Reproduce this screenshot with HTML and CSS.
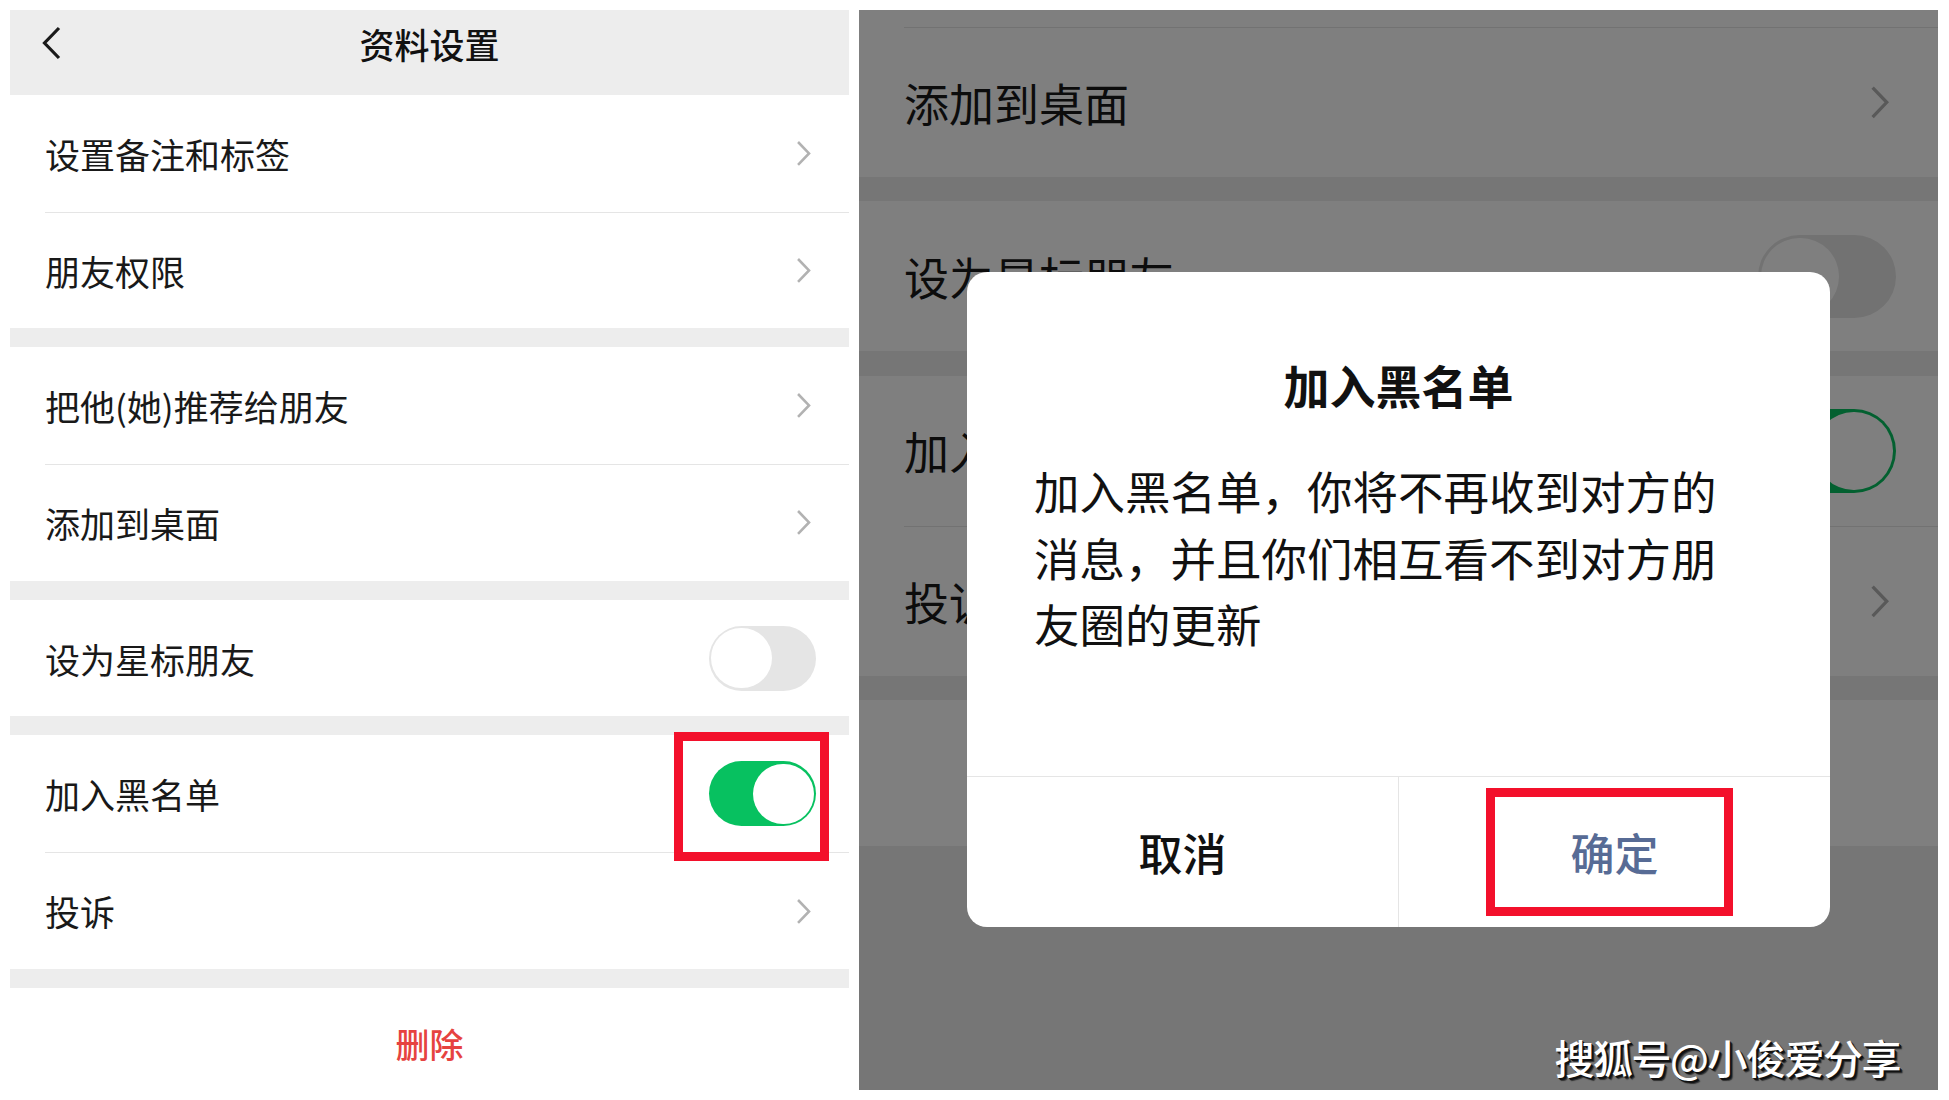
FILE: index.html
```html
<!DOCTYPE html>
<html lang="zh-CN">
  <head>
    <meta charset="UTF-8" />
    <meta name="viewport" content="width=device-width, initial-scale=1.0" />
    <title>资料设置</title>
    <link rel="stylesheet" href="styles.css">
  </head>
  <body>
    <div class="page">
      <!-- left: settings screen -->
      <section class="phone">
        <header class="nav-bar">
          <svg class="nav-back" viewBox="0 0 19 34"><path d="M17 2 L2.5 17 L17 32" /></svg>
          <h1 class="nav-title">资料设置</h1>
          <span></span>
        </header>

        <div class="group">
          <div class="cell"><div class="cell-body"><span class="cell-label">设置备注和标签</span><svg class="arrow" viewBox="0 0 15 27"><path d="M2 2 L13 13.5 L2 25" /></svg></div></div>
          <div class="cell"><div class="cell-body"><span class="cell-label">朋友权限</span><svg class="arrow" viewBox="0 0 15 27"><path d="M2 2 L13 13.5 L2 25" /></svg></div></div>
        </div>

        <div class="group">
          <div class="cell"><div class="cell-body"><span class="cell-label">把他(她)推荐给朋友</span><svg class="arrow" viewBox="0 0 15 27"><path d="M2 2 L13 13.5 L2 25" /></svg></div></div>
          <div class="cell"><div class="cell-body"><span class="cell-label">添加到桌面</span><svg class="arrow" viewBox="0 0 15 27"><path d="M2 2 L13 13.5 L2 25" /></svg></div></div>
        </div>

        <div class="group">
          <div class="cell"><div class="cell-body"><span class="cell-label">设为星标朋友</span><span class="switch"><span class="switch-thumb"></span></span></div></div>
        </div>

        <div class="group">
          <div class="cell">
            <div class="cell-body"><span class="cell-label">加入黑名单</span><span class="switch switch--on"><span class="switch-thumb"></span></span></div>
            <div class="mark mark--switch"></div>
          </div>
          <div class="cell"><div class="cell-body"><span class="cell-label">投诉</span><svg class="arrow" viewBox="0 0 15 27"><path d="M2 2 L13 13.5 L2 25" /></svg></div></div>
        </div>

        <div class="group">
          <div class="cell cell--danger"><span class="cell-label">删除</span></div>
        </div>
      </section>

      <!-- right: same screen scrolled, with the confirm dialog -->
      <section class="phone phone--dim">
        <div class="group">
          <div class="cell cell--cut"></div>
          <div class="cell"><div class="cell-body"><span class="cell-label">添加到桌面</span><svg class="arrow" viewBox="0 0 15 27"><path d="M2 2 L13 13.5 L2 25" /></svg></div></div>
        </div>

        <div class="group">
          <div class="cell"><div class="cell-body"><span class="cell-label">设为星标朋友</span><span class="switch"><span class="switch-thumb"></span></span></div></div>
        </div>

        <div class="group">
          <div class="cell"><div class="cell-body"><span class="cell-label">加入黑名单</span><span class="switch switch--on"><span class="switch-thumb"></span></span></div></div>
          <div class="cell"><div class="cell-body"><span class="cell-label">投诉</span><svg class="arrow" viewBox="0 0 15 27"><path d="M2 2 L13 13.5 L2 25" /></svg></div></div>
        </div>

        <div class="group">
          <div class="cell cell--danger"><span class="cell-label">删除</span></div>
        </div>

        <div class="mask">
          <div class="dialog">
            <h2 class="dialog-title">加入黑名单</h2>
            <p class="dialog-text">加入黑名单，你将不再收到对方的消息，并且你们相互看不到对方朋友圈的更新</p>
            <div class="dialog-actions">
              <div class="dialog-btn">取消</div>
              <div class="dialog-btn dialog-btn--primary">
                确定
                <div class="mark mark--confirm"></div>
              </div>
            </div>
          </div>
        </div>

        <div class="watermark">搜狐号@小俊爱分享</div>
      </section>
    </div>
  </body>
</html>
```

FILE: styles.css
```css
*,
*::after,
*::before {
  margin: 0;
  padding: 0;
  box-sizing: border-box;
}

body {
  background: #fff;
  font-family: "Noto Sans CJK SC", "Noto Sans", sans-serif;
  color: #191919;
}

.page {
  display: flex;
  gap: 10px;
  padding: 10px;
}

.phone {
  position: relative;
  width: 839px;
  height: 1080px;
  overflow: hidden;
  background: #ededed;
  font-size: 35px;
}

.phone--dim {
  width: 1079px;
  font-size: 45px;
}

/* top bar */
.nav-bar {
  height: 85px;
  display: grid;
  grid-template-columns: 1fr auto 1fr;
  align-items: center;
  padding-bottom: 19px;
}

.nav-back {
  width: 19px;
  height: 34px;
  margin-left: 32px;
  fill: none;
  stroke: #1a1a1a;
  stroke-width: 3.2;
}

.nav-title {
  font-size: 35px;
  font-weight: 500;
  line-height: 1;
  color: #111;
}

/* list */
.group {
  background: #fff;
  margin-bottom: 0.543em;
}

.cell {
  position: relative;
  height: 3.334em;
  padding-left: 1em;
  display: flex;
  background: #fff;
}

.cell--cut {
  height: 0.378em;
}

.cell-body {
  flex: 1;
  display: flex;
  align-items: center;
  justify-content: space-between;
  padding-right: 0.94em;
}

.cell + .cell .cell-body {
  border-top: 1px solid #e5e5e5;
}

.cell-label {
  line-height: 1;
}

.cell--danger {
  justify-content: center;
  align-items: center;
  padding-left: 0;
  color: #e64340;
  font-size: 0.97em;
  font-weight: 500;
}

.arrow {
  width: 0.43em;
  height: 0.77em;
  margin-right: 0.15em;
  fill: none;
  stroke: #b2b2b2;
  stroke-width: 2.6;
}

.switch {
  width: 3.06em;
  height: 1.86em;
  padding: 0.07em;
  border-radius: 1em;
  background: #e5e5e5;
  display: flex;
}

.switch--on {
  background: #07c160;
  justify-content: flex-end;
}

.switch-thumb {
  width: 1.72em;
  height: 1.72em;
  border-radius: 50%;
  background: #fff;
}

/* red annotation boxes */
.mark {
  position: absolute;
  z-index: 2;
  border: 9px solid #f3102b;
}

.mark--switch {
  top: -3px;
  right: 20px;
  width: 155px;
  height: 129px;
}

.mark--confirm {
  top: 11px;
  left: 87px;
  width: 247px;
  height: 128px;
}

/* dialog */
.mask {
  position: absolute;
  inset: 0;
  z-index: 3;
  background: rgba(0, 0, 0, 0.5);
  display: flex;
  justify-content: center;
  align-items: flex-start;
  padding-top: 262px;
}

.dialog {
  width: 863px;
  background: #fff;
  border-radius: 20px;
  overflow: hidden;
  color: #111;
}

.dialog-title {
  padding-top: 82px;
  font-size: 46px;
  font-weight: 700;
  line-height: 60px;
  text-align: center;
}

.dialog-text {
  width: 700px;
  margin: 43px 0 0 67px;
  padding-bottom: 119px;
  font-size: 45.5px;
  line-height: 66.5px;
}

.dialog-actions {
  display: flex;
  height: 151px;
  border-top: 1px solid #e5e5e5;
}

.dialog-btn {
  position: relative;
  flex: 1;
  display: flex;
  align-items: center;
  justify-content: center;
  font-size: 44px;
  font-weight: 500;
}

.dialog-btn + .dialog-btn {
  border-left: 1px solid #e5e5e5;
}

.dialog-btn--primary {
  color: #576b95;
}

.watermark {
  position: absolute;
  z-index: 4;
  right: 38px;
  bottom: 13px;
  font-size: 40px;
  font-weight: 500;
  line-height: 1;
  letter-spacing: -1.5px;
  color: #fff;
  text-shadow: 1px 1px 0 #111, 2px 2px 0 #111, 3px 3px 1px rgba(0, 0, 0, 0.6);
}
```
